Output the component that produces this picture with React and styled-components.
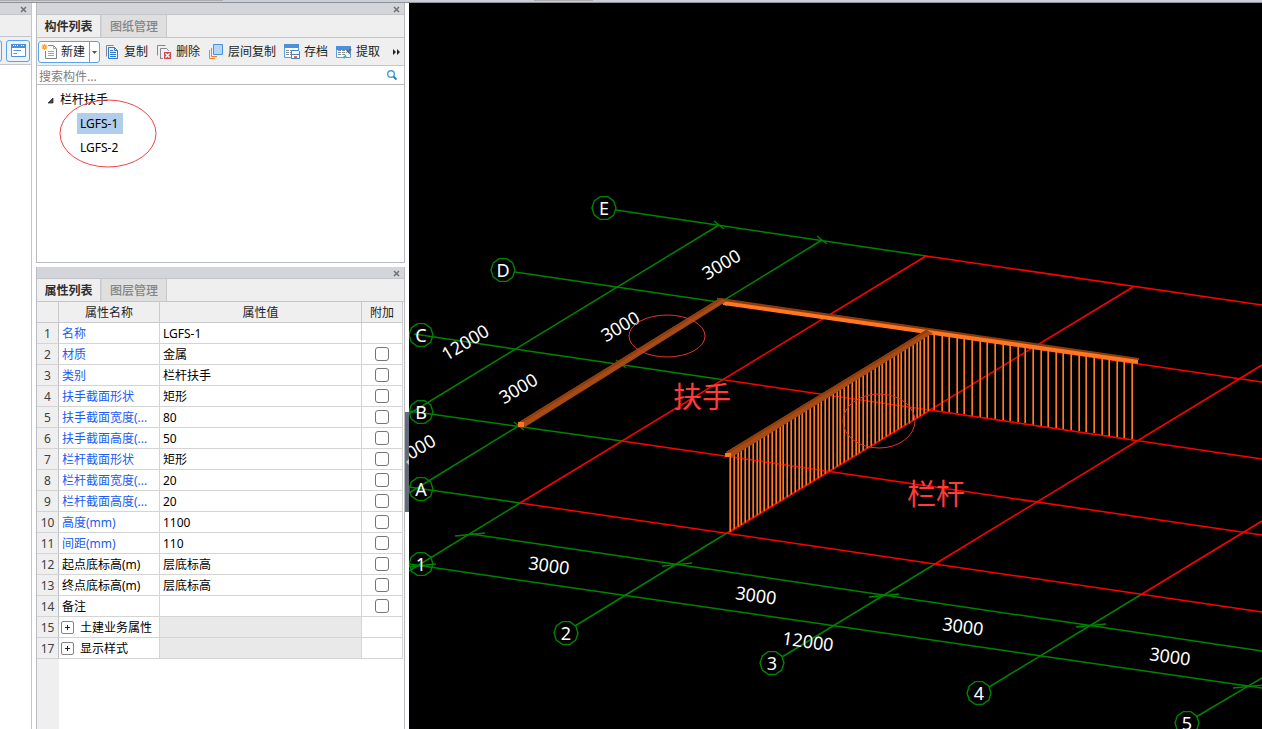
import React, { useState } from 'react';
import styled, { createGlobalStyle } from 'styled-components';

const GlobalStyle = createGlobalStyle`
  * {
    box-sizing: border-box;
  }

  body {
    margin: 0;
    background: white;
    color: #1e1e1e;
    font: 12px/20px "Noto Sans", "Noto Sans CJK SC", sans-serif;
  }

  button, input {
    margin: 0;
    padding: 0;
    border: none;
    background: none;
    color: inherit;
    font: inherit;
  }
`

const Page = styled.div`
  display: flex;
  flex-direction: column;
  height: 100vh;
  overflow: hidden;
`

const TopEdge = styled.div`
  display: flex;
  flex: none;
  gap: 311px;
  height: 3px;
  background: #ccd0d6;
  border-bottom: 1px solid #8e929b;
`

const EdgeMark = styled.div`
  width: ${props => props.$width};
  height: 1px;
  background: #aeacac;
`

const Workspace = styled.div`
  display: flex;
  flex: 1;
  min-height: 0;
`

const SideStrip = styled.div`
  display: flex;
  flex-direction: column;
  flex: none;
  width: 32px;
  margin-right: 4px;
  border-right: 1px solid #c3c5ca;
  overflow: hidden;
`

const StripSpace = styled.div`
  flex: none;
  height: 22px;
  background: #efefef;
  border-bottom: 1px solid #c3c5ca;
`

const StripTools = styled.div`
  display: flex;
  justify-content: flex-end;
  align-items: center;
  flex: none;
  gap: 4px;
  height: 28px;
  padding-right: 1px;
  background: #efefef;
  border-bottom: 1px solid #c3c5ca;
`

const StripButton = styled.button`
  display: flex;
  justify-content: center;
  align-items: center;
  flex: none;
  width: 24px;
  height: 22px;
  background: #eaf3fd;
  border: 1px solid #5aa3ea;
  border-radius: 3px;
`

const Docks = styled.div`
  display: flex;
  flex-direction: column;
  flex: none;
  gap: 4px;
  width: 369px;
`

const Panel = styled.section`
  display: flex;
  flex-direction: column;
  flex: ${props => props.$grow ? '1' : 'none'};
  min-height: 0;
  border: 1px solid #b9bbc0;
  border-top: none;
  border-bottom-width: ${props => props.$grow ? '0' : '1px'};
`

const TitleBar = styled.div`
  display: flex;
  justify-content: flex-end;
  align-items: center;
  flex: none;
  height: 12px;
  padding: 2px 4px 0 0;
  background: #d3d5da;
  border-bottom: 1px solid #c3c5ca;
`

const CloseButton = styled.button`
  display: flex;
`

const Tabs = styled.div`
  display: flex;
  flex: none;
  height: 23px;
  background: #efefef;
  border-bottom: 1px solid #c3c5ca;
`

const Tab = styled.button`
  width: ${props => props.$active ? '64px' : '66px'};
  padding-top: 2px;
  font-weight: ${props => props.$active ? 'bold' : '500'};
  color: ${props => props.$active ? '#303030' : '#858585'};
  background: ${props => props.$active ? '#efefef' : '#dfdfdf'};
  border-right: 1px solid #c8c9cc;
  border-left: ${props => props.$active ? 'none' : '1px solid #d3d4d6'};
`

const Toolbar = styled.div`
  display: flex;
  align-items: center;
  flex: none;
  gap: 8px;
  height: 28px;
  padding: 1px 0 0 1px;
  background: #efefef;
  border-bottom: 1px solid #c3c5ca;
`

const SplitButton = styled.div`
  display: flex;
  flex: none;
  width: 62px;
  height: 22px;
  margin-right: -4px;
  background: white;
  border: 1px solid #5aa3ea;
  border-radius: 3px;
`

const ToolButton = styled.button`
  display: flex;
  align-items: center;
  flex: none;
  gap: 4px;
  padding: ${props => props.$inset ? '0 4px 0 2px' : '0'};
`

const DropButton = styled.button`
  display: flex;
  justify-content: center;
  align-items: center;
  flex: 1;
  border-left: 1px solid #5aa3ea;
`

const MoreButton = styled.button`
  display: flex;
  margin-left: 4px;
`

const Search = styled.label`
  display: flex;
  align-items: center;
  flex: none;
  height: 19px;
  padding: 0 6px 0 2px;
  border-bottom: 1px solid #b9bbc0;
`

const SearchInput = styled.input`
  flex: 1;
  min-width: 0;
  height: 18px;
  padding-top: 2px;
  line-height: 16px;
  outline: none;

  &::placeholder {
    color: #7d7d7d;
    opacity: 1;
  }
`

const Tree = styled.ul`
  position: relative;
  height: 177px;
  margin: 0;
  padding: 3px 0 0 10px;
  color: black;
  list-style: none;
`

const Branch = styled.div`
  display: flex;
  align-items: center;
  gap: 6px;
  height: 24px;
`

const Leaves = styled.ul`
  margin: 0;
  padding: 0 0 0 30px;
  list-style: none;
`

const Leaf = styled.li`
  display: flex;
  align-items: flex-start;
  height: 24px;
  padding-top: 1px;
`

const LeafButton = styled.button`
  height: 21px;
  padding: 0 5px 0 3px;
  line-height: 21px;
  background: ${props => props.$selected ? '#b1cdec' : 'none'};
`

const TreeMark = styled.svg`
  position: absolute;
  top: 14px;
  left: 22px;
  pointer-events: none;
`

const TableArea = styled.div`
  display: flex;
  flex-direction: column;
  flex: 1;
  min-height: 0;
  padding-right: 1px;
`

const Table = styled.table`
  width: 100%;
  border-collapse: separate;
  border-spacing: 0;
  table-layout: fixed;
  line-height: 18px;
`

const HeadCell = styled.th`
  width: ${props => props.$width || 'auto'};
  height: 21px;
  padding: 2px 0 0;
  font-weight: normal;
  background: #efefef;
  border-right: 1px solid #c8c9cc;
  border-bottom: 1px solid #c8c9cc;
`

const IndexCell = styled.th`
  height: 21px;
  padding: 2px 0 0;
  font-weight: normal;
  color: #404040;
  background: #efefef;
  border-right: 1px solid #c0c1c4;
  border-bottom: 1px solid #d4d4d4;
`

const Cell = styled.td`
  height: 21px;
  padding: 2px 0 0 3px;
  white-space: nowrap;
  overflow: hidden;
  color: ${props => props.$link ? '#1a5cf5' : 'black'};
  background: ${props => props.$disabled ? '#e9e9e9' : 'white'};
  border-right: 1px solid #d4d4d4;
  border-bottom: 1px solid #d4d4d4;
`

const CheckCell = styled(Cell)`
  padding: 0 1px 0 0;
`

const GroupName = styled.div`
  display: flex;
  align-items: center;
  gap: 6px;
`

const Expander = styled.button`
  display: flex;
  justify-content: center;
  align-items: center;
  width: 13px;
  height: 13px;
  margin: -2px 0 0 -1px;
  border: 1px solid #858585;
  border-radius: 2px;
`

const Check = styled.input`
  display: block;
  width: 14px;
  height: 14px;
  margin: 0 auto;
  appearance: none;
  background: white;
  border: 1px solid #757575;
  border-radius: 3px;

  &:checked {
    background: #5aa3ea;
  }
`

const IndexFill = styled.div`
  flex: 1;
  width: 22px;
  background: #efefef;
`

const Splitter = styled.div`
  display: flex;
  flex-direction: column;
  flex: none;
  width: 4px;
  padding-top: 409px;
`

const SplitHandle = styled.button`
  display: flex;
  align-items: center;
  width: 4px;
  height: 100px;
  background: #626d79;
`

const View = styled.main`
  flex: 1;
  min-width: 0;
  background: black;
`

const Drawing = styled.svg`
  display: block;
  width: 100%;
  height: 100%;
  font-size: 18px;
`

const Cross = () => (
  <svg width="7" height="7" viewBox="0 0 7 7" stroke="#707070" strokeWidth="1.5">
    <path d="M1 1 6 6M6 1 1 6" />
  </svg>
)

const Icon = ({ children }) => (
  <svg width="16" height="16" viewBox="0 0 16 16" fill="none">{children}</svg>
)

const NewIcon = () => (
  <Icon>
    <path d="M7 1.5H12.5L15.5 4.5V14.5H4.5V7" fill="white" stroke="#858585" />
    <path d="M12.5 1.5V4.5H15.5M7 7.5H13M7 9.5H13M7 11.5H13" stroke="#a5a5a5" />
    <path d="M3.5 0V6M.5 3H6.5M1.5 1 5.5 5M5.5 1 1.5 5" stroke="#f59a23" strokeWidth="1.1" />
    <path d="M3 2.5H4V3.5H3Z" fill="white" />
  </Icon>
)

const CopyIcon = () => (
  <Icon>
    <path d="M2.5 12.5V1.5H9.5" stroke="#7d8790" />
    <path d="M4.5 3.5H10.5L13.5 6.5V14.5H4.5Z" fill="#e4f0fc" stroke="#2f78cc" />
    <path d="M10.5 3.5V6.5H13.5M6 6.5H9M6 8.5H12M6 10.5H12M6 12.5H12" stroke="#2f78cc" />
  </Icon>
)

const DeleteIcon = () => (
  <Icon>
    <path d="M1.5 11.5V1.5H9.5M4.5 14V4.5H10.5L12.5 6.5V7M4 14.5H7" stroke="#85898f" />
    <path d="M8 8H15V15H8Z" fill="#d9494f" />
    <path d="M9.5 9.5 13.5 13.5M13.5 9.5 9.5 13.5" stroke="white" strokeWidth="1.2" />
  </Icon>
)

const LevelIcon = () => (
  <Icon>
    <path d="M1.5 6V14.5H7M3.5 4V12.5H9" stroke="#ee7f33" />
    <path d="M5.5.5H14.5V10.5H5.5Z" fill="#b5d5fa" stroke="#4a90dc" />
  </Icon>
)

const SheetBase = ({ top }) => (
  <>
    <path d={`M.5 ${top + 0.5}H14.5V13.5H.5Z`} fill="white" stroke="#5c9de0" />
    <path d={`M0 ${top}H15V${top + 4}H0Z`} fill="#4a90dc" />
    <path d="M2 6.5H13M2 8.5H13M2 10.5H13" stroke="#7f8a94" strokeDasharray="3 1" />
  </>
)

const ArchiveIcon = () => (
  <Icon>
    <SheetBase top={0} />
    <path d="M7.5 6.5H14.5L15.5 7.5V14.5H7.5Z" fill="white" stroke="#3f83cf" />
    <path d="M8 10.5H15" stroke="#3f83cf" />
    <path d="M10 12H13V14H10Z" fill="#ee6b1f" />
  </Icon>
)

const ExtractIcon = () => (
  <Icon>
    <SheetBase top={2} />
    <path d="M7.5 14 13 8.5" stroke="#31b5c4" strokeWidth="2" />
    <path d="M10 11.5 13.5 8" stroke="#f7f7f7" strokeWidth="2.5" />
    <path d="M11 6.5 14 9.5M12.5 8 15 5" stroke="#626262" strokeWidth="1.6" />
  </Icon>
)

const WindowIcon = () => (
  <svg width="15" height="13" viewBox="0 0 15 13" fill="none">
    <path d="M.5.5H14.5V12.5H.5Z" fill="white" stroke="#4a90dc" />
    <path d="M0 0H15V4H0Z" fill="#4a90dc" />
    <path d="M2 1.5H7M10 1.5H13" stroke="white" strokeDasharray="1 1" />
    <path d="M2.5 6.5H10M2.5 9.5H6" stroke="#4a90dc" />
  </svg>
)

const properties = [
  { id: 1, name: '名称', value: 'LGFS-1', link: true },
  { id: 2, name: '材质', value: '金属', link: true, check: true },
  { id: 3, name: '类别', value: '栏杆扶手', link: true, check: true },
  { id: 4, name: '扶手截面形状', value: '矩形', link: true, check: true },
  { id: 5, name: '扶手截面宽度(...', value: '80', link: true, check: true },
  { id: 6, name: '扶手截面高度(...', value: '50', link: true, check: true },
  { id: 7, name: '栏杆截面形状', value: '矩形', link: true, check: true },
  { id: 8, name: '栏杆截面宽度(...', value: '20', link: true, check: true },
  { id: 9, name: '栏杆截面高度(...', value: '20', link: true, check: true },
  { id: 10, name: '高度(mm)', value: '1100', link: true, check: true },
  { id: 11, name: '间距(mm)', value: '110', link: true, check: true },
  { id: 12, name: '起点底标高(m)', value: '层底标高', check: true },
  { id: 13, name: '终点底标高(m)', value: '层底标高', check: true },
  { id: 14, name: '备注', value: '', check: true },
  { id: 15, name: '土建业务属性', group: true },
  { id: 17, name: '显示样式', group: true },
]

const greenLines = [
  // lettered axes
  [616, 210, 926, 256], [515, 272, 826, 318], [414, 334, 725, 380],
  [409, 411, 622, 441], [409, 487, 520, 503],
  // numbered axes
  [520, 503, 409, 571], [727, 533, 575, 626], [935, 564, 782, 657],
  [1142, 594, 989, 687], [1262, 678, 1196, 717],
  // dimension lines
  [719, 225, 409, 414], [822, 240, 409, 493],
  [471, 534, 1262, 651], [409, 564, 1262, 688],
]

const redLines = [
  [926, 256, 1262, 305], [826, 318, 1262, 382], [725, 380, 1262, 459],
  [622, 441, 1262, 535], [520, 503, 1262, 612],
  [520, 503, 926, 256], [727, 533, 1133, 287], [935, 564, 1262, 365],
  [1142, 594, 1262, 521],
]

const bubbles = [
  ['E', 604, 208], ['D', 503, 270], ['C', 421, 335], ['B', 421, 412], ['A', 421, 489],
  ['1', 421, 564], ['2', 566, 633], ['3', 772, 663], ['4', 979, 693], ['5', 1187, 723],
]

const dimensions = [
  ['3000', 721, 264, -31], ['3000', 620, 326, -31], ['3000', 518, 388, -31],
  ['3000', 416, 449, -31], ['12000', 465, 342, -31],
  ['3000', 549, 565, 8], ['3000', 756, 595, 8], ['3000', 963, 626, 8],
  ['3000', 1170, 656, 8], ['12000', 808, 641, 8],
]

const crossTicks = [[719, 225], [822, 240], [722, 302], [621, 364], [519, 426]]
const flatTicks = [[470, 534], [677, 564], [884, 595], [1091, 625], [1248, 686], [421, 565]]

const decagon = (cx, cy) => Array.from({ length: 10 }, (_, i) => {
  const angle = (i * 36 * Math.PI) / 180
  return `${(cx + 12 * Math.cos(angle)).toFixed(1)},${(cy + 12 * Math.sin(angle)).toFixed(1)}`
}).join(' ')

const posts = (count, x1, y1, x2, y2) => Array.from({ length: count }, (_, i) => {
  const t = i / (count - 1)
  return { x: Math.round(x1 + (x2 - x1) * t), y: Math.round(y1 + (y2 - y1) * t) }
})

const Posts = ({ items }) => items.map(({ x, y }) => (
  <g key={x}>
    <path d={`M${x - 0.5} ${y}V${y - 78}`} stroke="#a84e14" />
    <path d={`M${x + 0.5} ${y}V${y - 78}`} stroke="#ff7b22" />
  </g>
))

const Lines = ({ items, stroke }) => (
  <g stroke={stroke} strokeWidth="1.5">
    {items.map(([x1, y1, x2, y2], i) => (
      <line key={i} x1={x1} y1={y1} x2={x2} y2={y2} />
    ))}
  </g>
)

const Model = () => (
  <Drawing viewBox="409 3 853 726" preserveAspectRatio="xMinYMin slice" role="img" aria-label="三维视图">
    <Lines items={greenLines} stroke="#008400" />
    <g stroke="#008400" strokeWidth="1.4" fill="none">
      {crossTicks.map(([x, y]) => <path key={x} d={`M${x - 5} ${y - 4}L${x + 5} ${y + 4}`} />)}
      {flatTicks.map(([x, y]) => <path key={x} d={`M${x - 15} ${y + 2}L${x + 15} ${y - 1}`} />)}
      {bubbles.map(([name, x, y]) => <polygon key={name} points={decagon(x, y)} />)}
    </g>
    <Lines items={redLines} stroke="#ff0000" />

    <Posts items={posts(27, 934, 410, 1132, 439)} />
    <Posts items={posts(53, 730, 532, 928, 412)} />
    <path d="M729 533 931 410 1133 440" fill="none" stroke="#ff0000" />
    <path d="M727 456 931 487" fill="none" stroke="#ff0000" strokeOpacity="0.35" />

    <path d="M723 300 1138 359V364L723 305Z" fill="#ff7720" />
    <path d="M721 298 1139 358V360L723 301Z" fill="#8a3b10" />
    <path d="M519 422 720 298 727 301 525 427Z" fill="#a84a14" />
    <path d="M519 422 720 298 723 299 522 423Z" fill="#8f3e10" />
    <path d="M518 422H524V427H518Z" fill="#ff7720" />
    <path d="M726 452 926 330 933 333 732 457Z" fill="#a84a14" />
    <path d="M726 452 926 330 929 331 729 453Z" fill="#8f3e10" />
    <path d="M725 453H731V457H725Z" fill="#ff7720" />

    <g fill="white" textAnchor="middle">
      {bubbles.map(([name, x, y]) => <text key={name} x={x} y={y + 7}>{name}</text>)}
      {dimensions.map(([text, x, y, angle]) => (
        <text key={`${x}-${y}`} y="7" transform={`translate(${x} ${y}) rotate(${angle})`}>{text}</text>
      ))}
    </g>

    <g fill="#ff3b3b" fontSize="29" textAnchor="middle">
      <text x="702" y="408">扶手</text>
      <text x="936" y="505">栏杆</text>
    </g>
    <g fill="none" stroke="#e03535">
      <ellipse cx="667" cy="336" rx="38" ry="21" />
      <ellipse cx="879" cy="421" rx="36" ry="27" />
    </g>
  </Drawing>
)

const TitleRow = () => (
  <TitleBar>
    <CloseButton aria-label="关闭"><Cross /></CloseButton>
  </TitleBar>
)

const ComponentPanel = ({ selected, onSelect }) => (
  <Panel>
    <TitleRow />
    <Tabs>
      <Tab $active>构件列表</Tab>
      <Tab>图纸管理</Tab>
    </Tabs>
    <Toolbar>
      <SplitButton>
        <ToolButton $inset><NewIcon />新建</ToolButton>
        <DropButton aria-label="新建选项">
          <svg width="5" height="3" viewBox="0 0 5 3"><path d="M0 0H5L2.5 3Z" fill="#555" /></svg>
        </DropButton>
      </SplitButton>
      <ToolButton><CopyIcon />复制</ToolButton>
      <ToolButton><DeleteIcon />删除</ToolButton>
      <ToolButton><LevelIcon />层间复制</ToolButton>
      <ToolButton><ArchiveIcon />存档</ToolButton>
      <ToolButton><ExtractIcon />提取</ToolButton>
      <MoreButton aria-label="更多">
        <svg width="9" height="6" viewBox="0 0 9 6"><path d="M1 0 4 3 1 6ZM5 0 8 3 5 6Z" fill="#222" /></svg>
      </MoreButton>
    </Toolbar>
    <Search>
      <SearchInput placeholder="搜索构件..." aria-label="搜索构件" />
      <svg width="12" height="12" viewBox="0 0 12 12" fill="none">
        <circle cx="5" cy="5" r="3.3" stroke="#4a9fcf" strokeWidth="1.4" />
        <path d="M7.5 7.5 10.5 10.5" stroke="#2f7fb5" strokeWidth="2" />
      </svg>
    </Search>
    <Tree>
      <li>
        <Branch>
          <svg width="7" height="7" viewBox="0 0 7 7"><path d="M6 1V6H1Z" fill="#444" stroke="#222" strokeWidth=".7" /></svg>
          栏杆扶手
        </Branch>
        <Leaves>
          {['LGFS-1', 'LGFS-2'].map(name => (
            <Leaf key={name}>
              <LeafButton $selected={name === selected} onClick={() => onSelect(name)}>{name}</LeafButton>
            </Leaf>
          ))}
        </Leaves>
      </li>
      <TreeMark width="98" height="69" viewBox="0 0 98 69" fill="none" stroke="#f24444">
        <ellipse cx="49" cy="34.5" rx="48" ry="33.5" />
      </TreeMark>
    </Tree>
  </Panel>
)

const PropertyPanel = ({ selected }) => (
  <Panel $grow>
    <TitleRow />
    <Tabs>
      <Tab $active>属性列表</Tab>
      <Tab>图层管理</Tab>
    </Tabs>
    <TableArea>
      <Table>
        <thead>
          <tr>
            <HeadCell $width="22px" />
            <HeadCell $width="101px">属性名称</HeadCell>
            <HeadCell>属性值</HeadCell>
            <HeadCell $width="41px">附加</HeadCell>
          </tr>
        </thead>
        <tbody>
          {properties.map(row => (
            <tr key={row.id}>
              <IndexCell>{row.id}</IndexCell>
              <Cell $link={row.link}>
                {row.group ? (
                  <GroupName>
                    <Expander aria-label={`展开${row.name}`}>
                      <svg width="5" height="5" viewBox="0 0 5 5" stroke="#222"><path d="M0 2.5H5M2.5 0V5" /></svg>
                    </Expander>
                    {row.name}
                  </GroupName>
                ) : row.name}
              </Cell>
              <Cell $disabled={row.group}>{row.id === 1 ? selected : row.value}</Cell>
              <CheckCell>
                {row.check && <Check type="checkbox" aria-label={`附加${row.name}`} />}
              </CheckCell>
            </tr>
          ))}
        </tbody>
      </Table>
      <IndexFill />
    </TableArea>
  </Panel>
)

function App() {
  const [selected, setSelected] = useState('LGFS-1')

  return (
    <Page>
      <GlobalStyle />
      <TopEdge>
        <EdgeMark $width="223px" />
        <EdgeMark $width="59px" />
      </TopEdge>
      <Workspace>
        <SideStrip>
          <TitleRow />
          <StripSpace />
          <StripTools>
            <StripButton aria-label="列表" />
            <StripButton aria-label="窗口"><WindowIcon /></StripButton>
          </StripTools>
        </SideStrip>
        <Docks>
          <ComponentPanel selected={selected} onSelect={setSelected} />
          <PropertyPanel selected={selected} />
        </Docks>
        <Splitter>
          <SplitHandle aria-label="收起面板">
            <svg width="4" height="6" viewBox="0 0 4 6"><path d="M4 0V6L1 3Z" fill="#c5c9ce" /></svg>
          </SplitHandle>
        </Splitter>
        <View>
          <Model />
        </View>
      </Workspace>
    </Page>
  );
}

export default App;
